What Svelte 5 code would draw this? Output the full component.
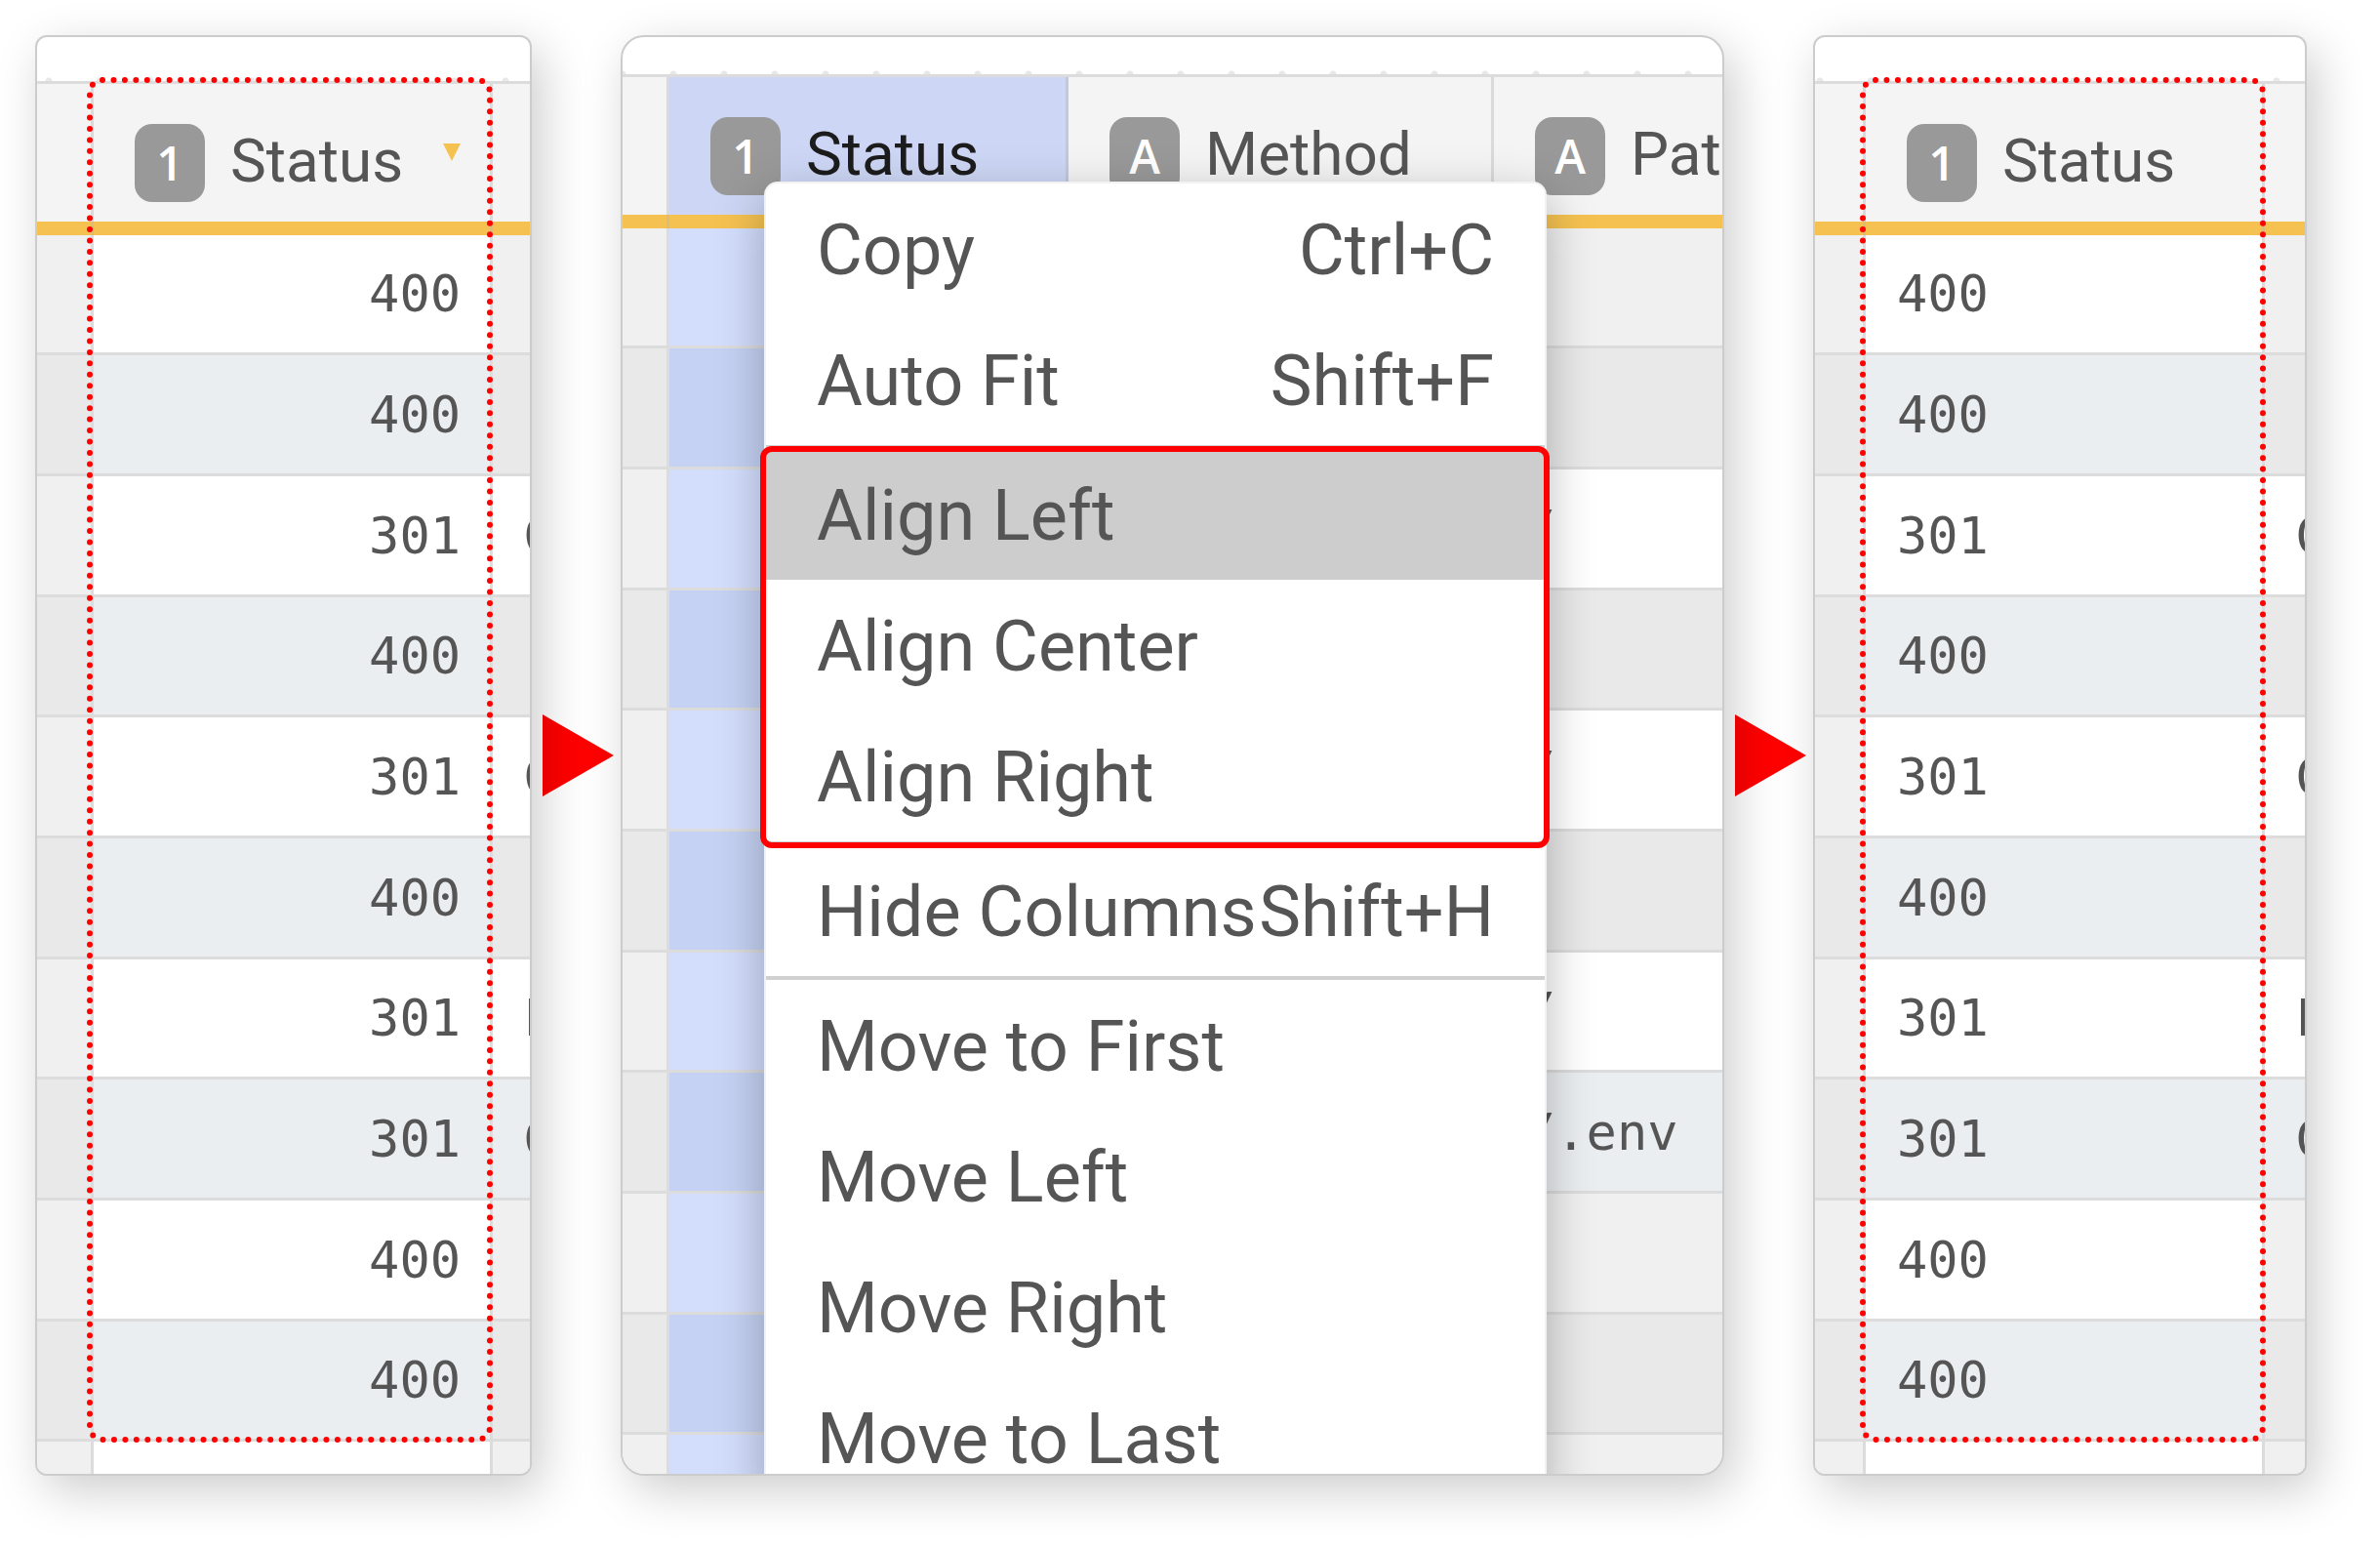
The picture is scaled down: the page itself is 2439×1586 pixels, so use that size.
<script>
  const statuses = ['400', '400', '301', '400', '301', '400', '301', '301', '400', '400'];
  const methods = ['', '', 'GET', '', 'GET', '', 'POST', 'GET', '', ''];
  const paths = ['', '', '/', '', '/', '', '/', '/.env', '', ''];

  const groups = [
    [
      { label: 'Copy', keys: 'Ctrl+C' },
      { label: 'Auto Fit', keys: 'Shift+F' }
    ],
    [
      { label: 'Align Left', active: true },
      { label: 'Align Center' },
      { label: 'Align Right' }
    ],
    [{ label: 'Hide Columns', keys: 'Shift+H' }],
    [
      { label: 'Move to First' },
      { label: 'Move Left' },
      { label: 'Move Right' },
      { label: 'Move to Last' }
    ]
  ];
</script>

{#snippet heading(badge, label, sorted)}
  <div class="heading">
    <span class="badge">{badge}</span>
    <span class="label">{label}</span>
    {#if sorted}
      <svg class="sort" viewBox="0 0 18 18" aria-label="Sorted descending"><path d="M0 0H18L9 18Z" /></svg>
    {/if}
  </div>
{/snippet}

{#snippet arrow()}
  <svg class="arrow" viewBox="0 0 73 84" aria-hidden="true"><path d="M0 0L73 42L0 84Z" /></svg>
{/snippet}

{#snippet outline()}
  <svg class="outline" aria-hidden="true">
    <rect x="3" y="3" width="410" height="1393" rx="13" pathLength="313" />
  </svg>
{/snippet}

{#snippet sideTable(sorted)}
  <table>
    <colgroup><col class="gutter" /><col class="status" /><col /></colgroup>
    <thead>
      <tr><th></th><th>{@render heading('1', 'Status', sorted)}</th><th></th></tr>
    </thead>
    <tbody>
      {#each statuses as status, i}
        <tr>
          <td class="empty"></td>
          <td class="num">{status}</td>
          <td class:empty={!methods[i]}>{methods[i]}</td>
        </tr>
      {/each}
      <tr class="tail"><td class="empty"></td><td></td><td class="empty"></td></tr>
    </tbody>
  </table>
{/snippet}

<main>
  <section class="card before">
    <div class="strip"></div>
    {@render sideTable(true)}
    {@render outline()}
  </section>

  {@render arrow()}

  <section class="card middle">
    <div class="strip"></div>
    <table>
      <colgroup><col class="gutter" /><col class="status" /><col class="method" /><col /></colgroup>
      <thead>
        <tr>
          <th></th>
          <th class="selected">{@render heading('1', 'Status', false)}</th>
          <th>{@render heading('A', 'Method', false)}</th>
          <th>{@render heading('A', 'Path', false)}</th>
        </tr>
      </thead>
      <tbody>
        {#each paths as path}
          <tr>
            <td class="empty"></td>
            <td class="selected"></td>
            <td></td>
            <td class:empty={!path}>{path}</td>
          </tr>
        {/each}
        <tr class="tail">
          <td class="empty"></td><td class="selected"></td><td></td><td class="empty"></td>
        </tr>
      </tbody>
    </table>

    <div class="menu" role="menu">
      {#each groups as group, g}
        <div class="group" class:framed={g === 1} role="group">
          {#each group as item}
            <button type="button" role="menuitem" class:active={item.active}>
              <span>{item.label}</span>
              {#if item.keys}<span>{item.keys}</span>{/if}
            </button>
          {/each}
        </div>
      {/each}
    </div>
  </section>

  {@render arrow()}

  <section class="card after">
    <div class="strip"></div>
    {@render sideTable(false)}
    {@render outline()}
  </section>
</main>

<style>
  :global(body) {
    margin: 0;
    background: #fff;
  }

  main {
    display: grid;
    grid-template-columns: minmax(0, 509fr) 91px minmax(0, 1131fr) 91px minmax(0, 506fr);
    align-items: center;
    box-sizing: border-box;
    padding: 36px 75px 74px 36px;
    overflow: hidden;
    font-family: Roboto, "Liberation Sans", sans-serif;
    color: #555;
  }

  .card {
    position: relative;
    overflow: hidden;
    border: 2px solid #ccc;
    border-radius: 12px;
    background: #fff;
    box-shadow: 10px 15px 50px rgba(0, 0, 0, 0.2);
  }

  .middle {
    border-radius: 24px;
  }

  .strip {
    height: 45px;
    border-bottom: 3px solid #dcdcdc;
    background: radial-gradient(circle at 50% 100%, #e8e8e8 3px, transparent 4px) 38px 100% / 52px 4px repeat-x;
  }

  .middle .strip {
    height: 38px;
    background-position-x: 26px;
  }

  .after .strip {
    background-position-x: 31px;
  }

  table {
    width: 100%;
    table-layout: fixed;
    border-collapse: separate;
    border-spacing: 0;
  }

  .gutter {
    width: 58px;
  }

  .middle .gutter {
    width: 48px;
  }

  .after .gutter {
    width: 52px;
  }

  .status {
    width: 409px;
  }

  .method {
    width: 436px;
  }

  th,
  td {
    box-sizing: border-box;
    padding: 0;
    overflow: hidden;
    white-space: nowrap;
    text-align: left;
  }

  th {
    height: 155px;
    border-right: 3px solid rgba(180, 180, 180, 0.4);
    background: linear-gradient(#f5c251, #f5c251) bottom / 100% 14px no-repeat border-box #f4f4f4;
    font-weight: 400;
    vertical-align: top;
  }

  th.selected {
    background-color: #cdd7f5;
    color: #1c1c1c;
  }

  td {
    height: 124px;
    border-right: 3px solid #dcdcdc;
    border-bottom: 3px solid #dcdcdc;
    background: #fff;
    font: 52px / 60px "DejaVu Sans Mono", monospace;
    padding-left: 32px;
  }

  tr:nth-child(3n + 1) td {
    height: 123px;
  }

  th:last-child,
  td:last-child {
    border-right: 0;
  }

  td.empty {
    background: #f0f0f0;
    padding: 0;
  }

  td.selected {
    background: #d3defd;
  }

  tr:nth-child(even) td {
    background: #eaeef1;
  }

  tr:nth-child(even) td.empty {
    background: #e9e9e9;
  }

  tr:nth-child(even) td.selected {
    background: #c5d2f3;
  }

  tr.tail td {
    height: 33px;
    border-bottom: 0;
  }

  .middle tr.tail td {
    height: 40px;
  }

  .before .num {
    padding-right: 30px;
    text-align: right;
  }

  .heading {
    display: flex;
    align-items: flex-start;
    gap: 26px;
    padding: 41px 30px 0 42px;
    font-size: 62px;
    line-height: 76px;
  }

  .badge {
    flex: none;
    width: 72px;
    border-radius: 18px;
    background: #999;
    color: #fff;
    font-family: "Open Sans", "Noto Sans", sans-serif;
    font-size: 48px;
    font-weight: 600;
    line-height: 80px;
    text-align: center;
  }

  .sort {
    width: 18px;
    height: 18px;
    margin: 20px 0 0 auto;
    fill: #f5c251;
  }

  .arrow {
    justify-self: end;
    width: 73px;
    height: 84px;
    margin-right: 7px;
    fill: #f00;
  }

  .outline {
    position: absolute;
    top: 41px;
    left: 51px;
    width: 416px;
    height: 1399px;
  }

  .after .outline {
    left: 46px;
  }

  .outline rect {
    fill: none;
    stroke: #f00;
    stroke-width: 6px;
    stroke-linecap: round;
    stroke-dasharray: 0 1;
  }

  .menu {
    position: absolute;
    top: 148px;
    left: 145px;
    width: 802px;
    box-sizing: border-box;
    border: 2px solid #f2f2f2;
    border-radius: 14px;
    background: #fff;
    box-shadow: 0 16px 50px rgba(0, 0, 0, 0.28);
  }

  .group {
    position: relative;
  }

  .group + .group {
    border-top: 4px solid #d0d0d0;
  }

  .framed::after {
    content: "";
    position: absolute;
    inset: -3px -5px -7px -6px;
    border: 6px solid #f00;
    border-radius: 12px;
    pointer-events: none;
    z-index: 1;
  }

  button {
    display: flex;
    justify-content: space-between;
    box-sizing: border-box;
    width: 100%;
    padding: 4px 52px 0;
    border: 0;
    background: none;
    color: inherit;
    font: 72px / 130px Roboto, "Liberation Sans", sans-serif;
    white-space: nowrap;
    text-align: left;
  }

  button.active {
    background: #cdcdcd;
  }
</style>
